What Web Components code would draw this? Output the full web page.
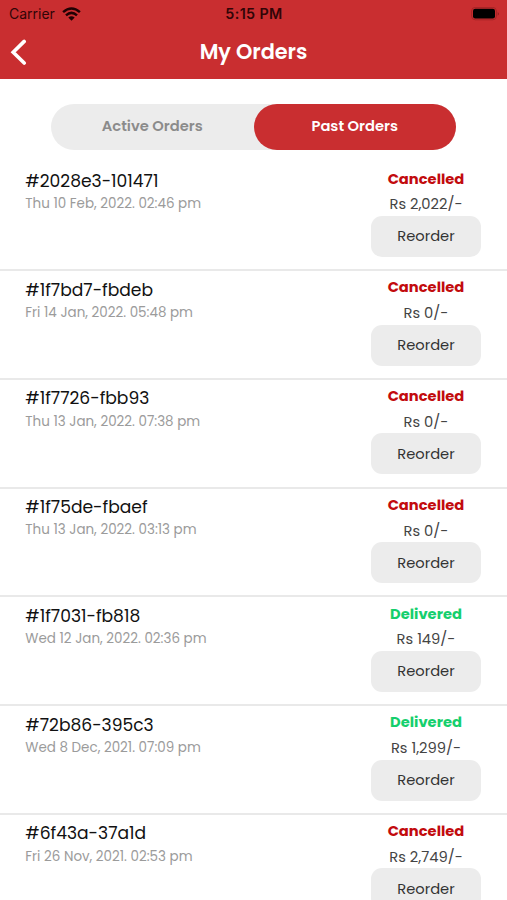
<!DOCTYPE html>
<html lang="en">
<head>
<meta charset="utf-8">
<title>My Orders</title>
<style>
html,body{margin:0;height:100%}
body{font-family:Poppins,Inter,"Open Sans",sans-serif;background:#fff;height:900px;overflow:hidden}
</style>
</head>
<body>
<orders-app></orders-app>
<script>
class StatusBar extends HTMLElement{
  connectedCallback(){
    this.attachShadow({mode:'open'}).innerHTML=`
<style>
:host{display:grid;grid-template-columns:1fr auto 1fr;align-items:center;height:28px;padding:0 7px 0 9px;color:#310507;font:400 14px/28px Inter,sans-serif;box-sizing:border-box}
.left{display:flex;align-items:center;gap:7px}
.time{font-weight:600;font-size:14.3px;letter-spacing:.4px;margin-left:-1px}
.battery{justify-self:end}
svg{display:block}
svg.wifi{margin-top:-1px}
</style>
<div class="left"><span>Carrier</span>
<svg class="wifi" width="19" height="14" viewBox="0 0 19 14" fill="none" stroke="#200103" stroke-width="2.5"><path d="M1.1 5.1Q9.5-2.2 17.9 5.1M4 8.4Q9.5 3.4 15 8.4"/><path d="M6.3 10.6Q9.5 7.8 12.7 10.6L9.5 13.8Z" fill="#200103" stroke="none"/></svg></div>
<span class="time">5:15 PM</span>
<svg class="battery" width="29" height="14" viewBox="0 0 29 14"><rect x=".6" y=".4" width="24.8" height="12.4" rx="3.6" fill="none" stroke="#a52426"/><rect x="2" y="1.8" width="22" height="9.6" rx="2.2" fill="#000"/><path d="M26.8 4.8Q28.6 6.8 26.8 8.8Z" fill="#7d191c"/></svg>`;
  }
}
customElements.define('status-bar',StatusBar);

class NavBar extends HTMLElement{
  connectedCallback(){
    this.attachShadow({mode:'open'}).innerHTML=`
<style>
:host{display:grid;grid-template-columns:1fr auto 1fr;height:51px;color:#fff;font-size:20.82px;font-weight:600;line-height:47.5px;box-sizing:border-box;padding:0 10px}
svg{display:block;margin-top:11px}
</style>
<svg width="18" height="27" viewBox="0 0 18 27" fill="none" stroke="#fff" stroke-width="3.6" stroke-linecap="round"><path d="M14.2 2.4L3.2 13.2L14.2 24"/></svg>
<slot></slot>`;
  }
}
customElements.define('nav-bar',NavBar);

class OrderTabs extends HTMLElement{
  connectedCallback(){
    this.attachShadow({mode:'open'}).innerHTML=`
<style>
:host{display:grid;grid-template-columns:1fr 1fr;margin:24.5px 51px 0 51px;height:46.5px;border-radius:24px;background:#ececec;font-weight:600;font-size:14.7px;line-height:45.4px;color:#8b8b8b}
div{text-align:center;border-radius:24px}
.on{background:#c92e30;color:#fff}
</style>
<div>Active Orders</div>
<div class="on">Past Orders</div>`;
  }
}
customElements.define('order-tabs',OrderTabs);

class OrderRow extends HTMLElement{
  connectedCallback(){
    const [id,date,state,price]=this.data;
    this.attachShadow({mode:'open'}).innerHTML=`
<style>
:host{display:flex;justify-content:space-between;height:108.75px;box-sizing:border-box;border-bottom:2px solid #e9e9e9;padding:6.5px 26.3px 0 25.3px;flex:none}
.id{font-size:17.14px;line-height:24px;color:#111}
.date{font-size:13.47px;line-height:20px;margin-top:1.4px;color:#9b9b9b}
.side{width:109.4px;display:flex;flex-direction:column;align-items:center;margin-top:-.1px;font-size:14.7px;line-height:20px}
.state{font-weight:700;color:${state==='Delivered'?'#15cf6d':'#c20b0d'}}
.price{margin:5.6px 0 1.6px;color:#444}
button{all:unset;display:block;text-align:center;width:100%;height:41px;border-radius:11px;background:#ececec;color:#333;line-height:40px}
</style>
<div><div class="id">${id}</div><div class="date">${date}</div></div>
<div class="side"><div class="state">${state}</div><div class="price">${price}</div><button>Reorder</button></div>`;
  }
}
customElements.define('order-row',OrderRow);

const orders=[
['#2028e3-101471','Thu 10 Feb, 2022. 02:46 pm','Cancelled','Rs 2,022/-'],
['#1f7bd7-fbdeb','Fri 14 Jan, 2022. 05:48 pm','Cancelled','Rs 0/-'],
['#1f7726-fbb93','Thu 13 Jan, 2022. 07:38 pm','Cancelled','Rs 0/-'],
['#1f75de-fbaef','Thu 13 Jan, 2022. 03:13 pm','Cancelled','Rs 0/-'],
['#1f7031-fb818','Wed 12 Jan, 2022. 02:36 pm','Delivered','Rs 149/-'],
['#72b86-395c3','Wed 8 Dec, 2021. 07:09 pm','Delivered','Rs 1,299/-'],
['#6f43a-37a1d','Fri 26 Nov, 2021. 02:53 pm','Cancelled','Rs 2,749/-']];

class OrdersApp extends HTMLElement{
  connectedCallback(){
    const root=this.attachShadow({mode:'open'});
    root.innerHTML=`
<style>
:host{display:flex;flex-direction:column;height:900px;overflow:hidden}
header{background:#c92e30;height:79px;flex:none}
order-tabs{flex:none}
main{display:flex;flex-direction:column;margin-top:12.25px}
</style>
<header><status-bar></status-bar><nav-bar><span>My Orders</span></nav-bar></header>
<order-tabs></order-tabs><main></main>`;
    const main=root.querySelector('main');
    for(const o of orders){const r=document.createElement('order-row');r.data=o;main.append(r);}
  }
}
customElements.define('orders-app',OrdersApp);
</script>
</body>
</html>
